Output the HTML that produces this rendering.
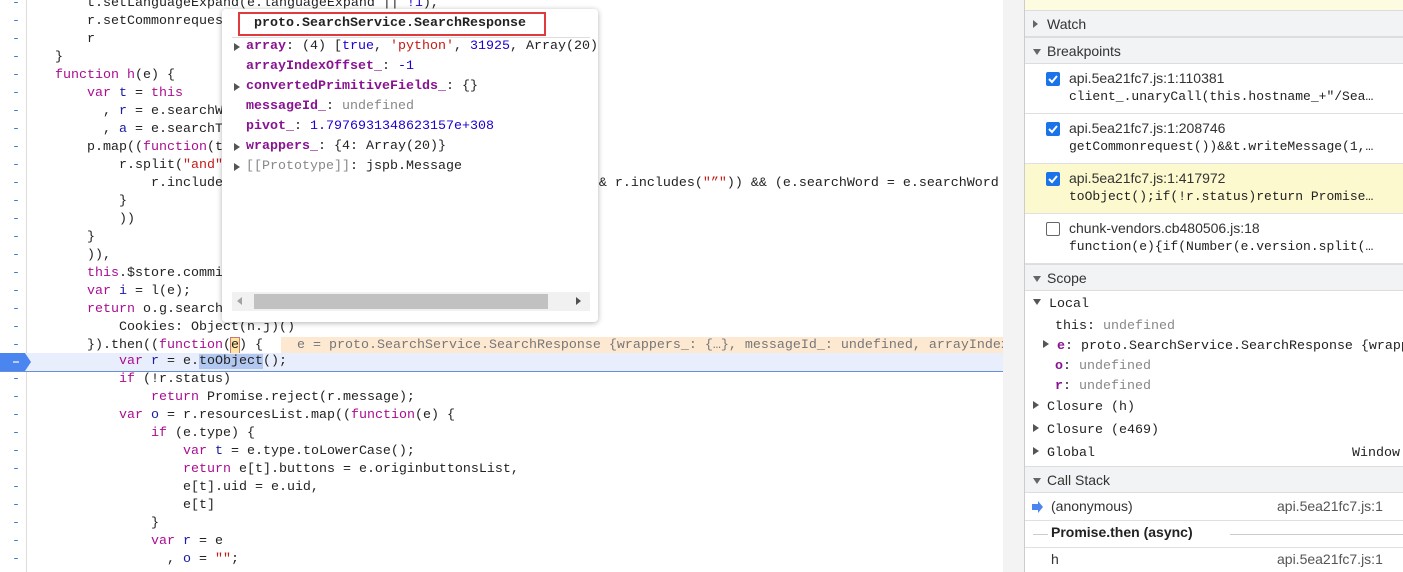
<!DOCTYPE html>
<html><head><meta charset="utf-8"><style>
*{margin:0;padding:0;box-sizing:border-box}
body{width:1403px;height:572px;overflow:hidden;background:#fff;position:relative;font-family:"Liberation Sans",sans-serif}
.code{position:absolute;left:0;top:0;width:1003px;height:572px;overflow:hidden}
.ln{position:absolute;left:0;width:1003px;height:18px;line-height:18px;font-size:13.33px;white-space:pre;font-family:"Liberation Mono",monospace;color:#222}
.ln .g{position:absolute;left:12px;color:#3c78d8;width:10px}
.ln .t{position:absolute;left:23px}
.gl{position:absolute;left:26px;top:0;width:1px;height:572px;background:#ddd}
.k{color:#aa0d91}.v{color:#1a1aa6}.s{color:#c41a16}.n{color:#1c00cf}
.pop{position:absolute;left:222px;top:9px;width:376px;height:313px;background:#fff;border-radius:4px;box-shadow:0 1px 6px rgba(0,0,0,.3);overflow:hidden}
.pr{position:absolute;left:24px;font-size:13.33px;line-height:20px;white-space:pre;font-family:"Liberation Mono",monospace;color:#222}
.pk{color:#881391;font-weight:bold}.gr{color:#888}
.tri{position:absolute;left:-12px;top:6px;width:0;height:0;border-left:6px solid #555;border-top:4px solid transparent;border-bottom:4px solid transparent}
.tri2{position:absolute;width:0;height:0;border-top:6px solid #555;border-left:4px solid transparent;border-right:4px solid transparent}
.side{position:absolute;left:1024px;top:0;width:379px;height:572px;border-left:1px solid #ccc;background:#fff}
.hd{position:absolute;left:0;width:379px;height:27px;background:#f1f3f4;border-top:1px solid #ddd;border-bottom:1px solid #ddd;font-size:14px;line-height:26px;padding-left:22px;color:#333}
.hd .tri,.hd .tri2{left:8px}
.bp{position:absolute;left:0;width:379px;height:50px;border-bottom:1px solid #e0e0e0;font-size:14px}
.bp .cb{position:absolute;left:21px;top:8px;width:14px;height:14px;border-radius:2px;background:#1a73e8}
.bp .cb.off{background:#fff;border:1px solid #666}
.bp .a{position:absolute;left:44px;top:6px;color:#333}
.bp .b{position:absolute;left:44px;top:25px;font-family:"Liberation Mono",monospace;font-size:13px;color:#222;white-space:pre}
.sc{position:absolute;font-size:13.33px;font-family:"Liberation Mono",monospace;white-space:pre;color:#222;line-height:18px}
</style></head><body>
<div class="code">
<div class="gl"></div>
<div class="ln" style="top:-5px"><span class="g">-</span><span class="t">        t.setLanguageExpand(e.languageExpand || <span class="n">!1</span>),</span></div>
<div class="ln" style="top:13px"><span class="g">-</span><span class="t">        r.setCommonrequest(</span></div>
<div class="ln" style="top:31px"><span class="g">-</span><span class="t">        r</span></div>
<div class="ln" style="top:49px"><span class="g">-</span><span class="t">    }</span></div>
<div class="ln" style="top:67px"><span class="g">-</span><span class="t">    <span class="k">function</span> <span class="k">h</span>(e) {</span></div>
<div class="ln" style="top:85px"><span class="g">-</span><span class="t">        <span class="k">var</span> <span class="v">t</span> = <span class="k">this</span></span></div>
<div class="ln" style="top:103px"><span class="g">-</span><span class="t">          , <span class="v">r</span> = e.searchWord</span></div>
<div class="ln" style="top:121px"><span class="g">-</span><span class="t">          , <span class="v">a</span> = e.searchType</span></div>
<div class="ln" style="top:139px"><span class="g">-</span><span class="t">        p.map((<span class="k">function</span>(t</span></div>
<div class="ln" style="top:157px"><span class="g">-</span><span class="t">            r.split(<span class="s">"and"</span></span></div>
<div class="ln" style="top:175px"><span class="g">-</span><span class="t">                r.includes(                                             &amp; r.includes(<span class="s">"”"</span>)) &amp;&amp; (e.searchWord = e.searchWord</span></div>
<div class="ln" style="top:193px"><span class="g">-</span><span class="t">            }</span></div>
<div class="ln" style="top:211px"><span class="g">-</span><span class="t">            ))</span></div>
<div class="ln" style="top:229px"><span class="g">-</span><span class="t">        }</span></div>
<div class="ln" style="top:247px"><span class="g">-</span><span class="t">        )),</span></div>
<div class="ln" style="top:265px"><span class="g">-</span><span class="t">        <span class="k">this</span>.$store.commit</span></div>
<div class="ln" style="top:283px"><span class="g">-</span><span class="t">        <span class="k">var</span> <span class="v">i</span> = l(e);</span></div>
<div class="ln" style="top:301px"><span class="g">-</span><span class="t">        <span class="k">return</span> o.g.search</span></div>
<div class="ln" style="top:319px"><span class="g">-</span><span class="t">            Cookies: Object(n.j)()</span></div>
<div class="ln" style="top:337px"><span class="g">-</span><span class="t">        }).then((<span class="k">function</span>(<span style="outline:1px solid #c77;background:#ffe6a0">e</span>) {  </span><span style="position:absolute;left:281px;top:0;width:722px;height:17px;background:#fde9d2;color:#777">  e = proto.SearchService.SearchResponse {wrappers_: {…}, messageId_: undefined, arrayIndexOffset_: -1}</span></div>
<div class="ln" style="top:353px;height:19px;background:#e8eefc;border-bottom:1px solid #6a8fd8"><svg style="position:absolute;left:0;top:0" width="32" height="18"><path d="M0 0H25L31 9L25 18H0Z" fill="#4b86f0"/><path d="M13 9H19" stroke="#fff" stroke-width="1.2"/></svg><span class="t">            <span class="k">var</span> <span class="v">r</span> = e.<span style="background:#b2c8f0">toObject</span>();</span></div>
<div class="ln" style="top:371px"><span class="g">-</span><span class="t">            <span class="k">if</span> (!r.status)</span></div>
<div class="ln" style="top:389px"><span class="g">-</span><span class="t">                <span class="k">return</span> Promise.reject(r.message);</span></div>
<div class="ln" style="top:407px"><span class="g">-</span><span class="t">            <span class="k">var</span> <span class="v">o</span> = r.resourcesList.map((<span class="k">function</span>(e) {</span></div>
<div class="ln" style="top:425px"><span class="g">-</span><span class="t">                <span class="k">if</span> (e.type) {</span></div>
<div class="ln" style="top:443px"><span class="g">-</span><span class="t">                    <span class="k">var</span> <span class="v">t</span> = e.type.toLowerCase();</span></div>
<div class="ln" style="top:461px"><span class="g">-</span><span class="t">                    <span class="k">return</span> e[t].buttons = e.originbuttonsList,</span></div>
<div class="ln" style="top:479px"><span class="g">-</span><span class="t">                    e[t].uid = e.uid,</span></div>
<div class="ln" style="top:497px"><span class="g">-</span><span class="t">                    e[t]</span></div>
<div class="ln" style="top:515px"><span class="g">-</span><span class="t">                }</span></div>
<div class="ln" style="top:533px"><span class="g">-</span><span class="t">                <span class="k">var</span> <span class="v">r</span> = e</span></div>
<div class="ln" style="top:551px"><span class="g">-</span><span class="t">                  , <span class="v">o</span> = <span class="s">""</span>;</span></div>
</div>
<div style="position:absolute;left:1003px;top:0;width:21px;height:572px;background:#f3f3f3"></div>

<div class="pop">
 <div style="position:absolute;left:16px;top:3px;width:308px;height:24px;border:2px solid #e03a3a"></div>
 <div style="position:absolute;left:10px;top:28px;width:358px;height:1px;background:#ddd"></div>
 <div style="position:absolute;left:32px;top:6px;font-family:'Liberation Mono',monospace;font-size:13.33px;font-weight:bold;color:#222;line-height:18px">proto.SearchService.SearchResponse</div>
 <div class="pr" style="top:28px"><span class="tri"></span><span class="pk">array</span>: (4) [<span class="n">true</span>, <span class="s">'python'</span>, <span class="n">31925</span>, Array(20)]</div>
 <div class="pr" style="top:48px"><span class="pk">arrayIndexOffset_</span>: <span class="n">-1</span></div>
 <div class="pr" style="top:68px"><span class="tri"></span><span class="pk">convertedPrimitiveFields_</span>: {}</div>
 <div class="pr" style="top:88px"><span class="pk">messageId_</span>: <span class="gr">undefined</span></div>
 <div class="pr" style="top:108px"><span class="pk">pivot_</span>: <span class="n">1.7976931348623157e+308</span></div>
 <div class="pr" style="top:128px"><span class="tri"></span><span class="pk">wrappers_</span>: {4: Array(20)}</div>
 <div class="pr" style="top:148px"><span class="tri"></span><span class="gr">[[Prototype]]</span>: jspb.Message</div>
 <div style="position:absolute;left:10px;top:283px;width:358px;height:19px;background:#f1f1f1"></div>
 <div style="position:absolute;left:32px;top:285px;width:294px;height:15px;background:#c1c1c1"></div>
 <div style="position:absolute;left:15px;top:288px;border-right:5px solid #a3a3a3;border-top:4px solid transparent;border-bottom:4px solid transparent"></div>
 <div style="position:absolute;left:354px;top:288px;border-left:5px solid #505050;border-top:4px solid transparent;border-bottom:4px solid transparent"></div>
</div>

<div class="side">
 <div style="position:absolute;left:0;top:0;width:379px;height:10px;background:#fefce0"></div>
 <div class="hd" style="top:10px"><span class="tri" style="top:9px;border-left-color:#666;border-left-width:5px"></span>Watch</div>
 <div class="hd" style="top:37px"><span class="tri2" style="top:11px;border-top-color:#666"></span>Breakpoints</div>
 <div class="bp" style="top:64px"><span class="cb"><svg width="14" height="14"><path d="M3 7L6 10L11 4" stroke="#fff" stroke-width="2" fill="none"/></svg></span><span class="a">api.5ea21fc7.js:1:110381</span><span class="b">client_.unaryCall(this.hostname_+"/Sea…</span></div>
 <div class="bp" style="top:114px"><span class="cb"><svg width="14" height="14"><path d="M3 7L6 10L11 4" stroke="#fff" stroke-width="2" fill="none"/></svg></span><span class="a">api.5ea21fc7.js:1:208746</span><span class="b">getCommonrequest())&amp;&amp;t.writeMessage(1,…</span></div>
 <div class="bp" style="top:164px;background:#fcf9cf"><span class="cb"><svg width="14" height="14"><path d="M3 7L6 10L11 4" stroke="#fff" stroke-width="2" fill="none"/></svg></span><span class="a">api.5ea21fc7.js:1:417972</span><span class="b">toObject();if(!r.status)return Promise…</span></div>
 <div class="bp" style="top:214px"><span class="cb off"></span><span class="a">chunk-vendors.cb480506.js:18</span><span class="b">function(e){if(Number(e.version.split(…</span></div>
 <div class="hd" style="top:264px"><span class="tri2" style="top:11px;border-top-color:#666"></span>Scope</div>
 <div class="sc" style="left:8px;top:296px"><span class="tri2" style="position:relative;display:inline-block;top:-2px;border-top-color:#555"></span> Local</div>
 <div class="sc" style="left:30px;top:318px">this: <span class="gr">undefined</span></div>
 <div class="sc" style="left:18px;top:338px"><span class="tri" style="position:relative;display:inline-block;left:0;top:-1px"></span> <span class="pk">e</span>: proto.SearchService.SearchResponse {wrappers_</div>
 <div class="sc" style="left:30px;top:358px"><span class="pk">o</span>: <span class="gr">undefined</span></div>
 <div class="sc" style="left:30px;top:378px"><span class="pk">r</span>: <span class="gr">undefined</span></div>
 <div class="sc" style="left:8px;top:399px"><span class="tri" style="position:relative;display:inline-block;left:0;top:-1px"></span> Closure (h)</div>
 <div class="sc" style="left:8px;top:422px"><span class="tri" style="position:relative;display:inline-block;left:0;top:-1px"></span> Closure (e469)</div>
 <div class="sc" style="left:8px;top:445px"><span class="tri" style="position:relative;display:inline-block;left:0;top:-1px"></span> Global</div>
 <div class="sc" style="left:327px;top:445px">Window</div>
 <div class="hd" style="top:466px"><span class="tri2" style="top:11px;border-top-color:#666"></span>Call Stack</div>
 <svg style="position:absolute;left:7px;top:501px" width="12" height="12"><path d="M0 3H6V0L11 6L6 12V9H0Z" fill="#4b86f0"/></svg>
 <div style="position:absolute;left:26px;top:498px;font-size:14px;color:#333">(anonymous)</div>
 <div style="position:absolute;left:252px;top:498px;font-size:14px;color:#555">api.5ea21fc7.js:1</div>
 <div style="position:absolute;left:0;top:520px;width:379px;height:1px;background:#e0e0e0"></div>
 <div style="position:absolute;left:8px;top:534px;width:15px;height:1px;background:#ccc"></div>
 <div style="position:absolute;left:26px;top:524px;font-size:14px;font-weight:bold;color:#222">Promise.then (async)</div>
 <div style="position:absolute;left:205px;top:534px;width:174px;height:1px;background:#ccc"></div>
 <div style="position:absolute;left:0;top:547px;width:379px;height:1px;background:#e0e0e0"></div>
 <div style="position:absolute;left:26px;top:551px;font-size:14px;color:#333">h</div>
 <div style="position:absolute;left:252px;top:551px;font-size:14px;color:#555">api.5ea21fc7.js:1</div>
</div>
</body></html>
